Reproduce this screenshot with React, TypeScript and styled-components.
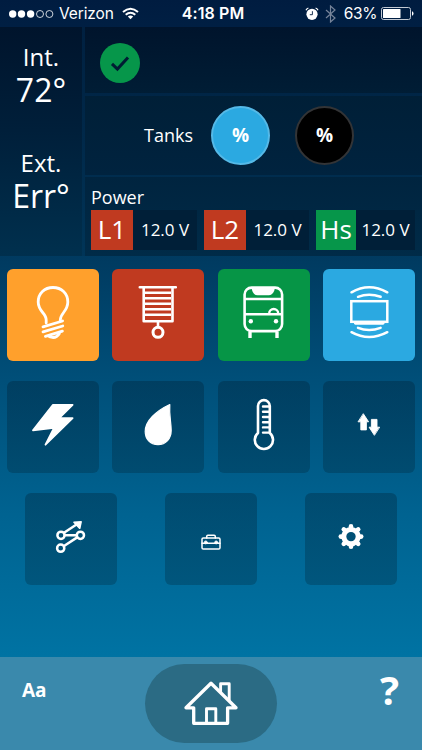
import React from 'react';
import styled, { createGlobalStyle } from 'styled-components';

const GlobalStyle = createGlobalStyle`
  * { box-sizing: border-box; }
  body { margin: 0; background: #003b60; }
`;

const Screen = styled.div`
  width: 422px;
  height: 750px;
  display: flex;
  flex-direction: column;
  overflow: hidden;
  color: #fff;
  font-family: 'Open Sans', sans-serif;
  background: linear-gradient(#001c40 0, #002b50 130px, #003b61 262px, #004f79 380px, #006391 515px, #0073a3 657px);
`;

const StatusBar = styled.header`
  height: 27px;
  display: grid;
  grid-template-columns: 1fr auto 1fr;
  align-items: center;
  padding: 0 8px 0 9px;
  font: 400 16px/27px Inter, sans-serif;
`;

const StatusGroup = styled.div<{ $end?: boolean }>`
  display: flex;
  align-items: center;
  justify-content: ${(p) => (p.$end ? 'flex-end' : 'flex-start')};
`;

const Carrier = styled.span`
  margin: 0 8px 0 5px;
  font-size: 15.5px;
  letter-spacing: -0.1px;
`;

const Clock = styled.span`
  padding-left: 3px;
  font-size: 16px;
  font-weight: 600;
  letter-spacing: 0.1px;
`;

const Charge = styled.span`
  margin: 0 4px 0 8px;
  font-size: 15.5px;
  letter-spacing: -0.4px;
`;

const Dashboard = styled.section`
  height: 229px;
  display: grid;
  grid-template-columns: 82px 1fr;
  column-gap: 3px;
  background: linear-gradient(#002040, #00294a 50%, #003558);
`;

const Climate = styled.div`
  display: flex;
  flex-direction: column;
  gap: 40px;
  padding-top: 13px;
  text-align: center;
  background: linear-gradient(#00142c, #001f3a 45%, #00304e);
`;

const Reading = styled.div`
  height: 66px;
`;

const ReadingLabel = styled.div`
  font-size: 24px;
  line-height: 33px;
`;

const ReadingValue = styled.div`
  font-size: 32px;
  line-height: 33px;
`;

const Panels = styled.div`
  display: grid;
  grid-template-rows: 66px 79px 79px;
  row-gap: 2.5px;
`;

const StatusPanel = styled.div`
  display: flex;
  align-items: center;
  padding: 5px 0 0 15px;
  background: linear-gradient(#00142c, #001d35);
`;

const TanksPanel = styled.div`
  display: flex;
  align-items: center;
  padding-left: 59px;
  font-size: 18px;
  background: linear-gradient(#001f37, #00233f);
`;

const TankLabel = styled.span`
  width: 49px;
`;

const TankGauge = styled.div<{ $fill: string; $ring: string; $gap: number }>`
  width: 59px;
  height: 59px;
  margin-left: ${(p) => p.$gap}px;
  border-radius: 50%;
  border: 2.5px solid ${(p) => p.$ring};
  background: ${(p) => p.$fill};
  display: flex;
  align-items: center;
  justify-content: center;
  font-size: 19px;
  font-weight: 700;
`;

const PowerPanel = styled.div`
  padding: 7px 7px 0 6px;
  background: linear-gradient(#00243f, #002b48);
`;

const PowerTitle = styled.div`
  font-size: 18px;
  line-height: 26px;
`;

const Meters = styled.div`
  display: flex;
  justify-content: space-between;
`;

const Meter = styled.div`
  height: 40px;
  display: flex;
  background: #001f38;
`;

const MeterName = styled.div<{ $color: string; $width: number }>`
  width: ${(p) => p.$width}px;
  background: ${(p) => p.$color};
  font-size: 26px;
  line-height: 39px;
  text-align: center;
`;

const MeterValue = styled.div<{ $width: number }>`
  width: ${(p) => p.$width}px;
  font-size: 17px;
  line-height: 40px;
  text-align: center;
  white-space: nowrap;
`;

const Controls = styled.main`
  height: 401px;
  padding: 13px 7px 0;
  display: flex;
  flex-direction: column;
  gap: 20px;
`;

const TileRow = styled.div<{ $inset?: number }>`
  display: flex;
  justify-content: space-between;
  padding: 0 ${(p) => p.$inset ?? 0}px;
`;

const Tile = styled.button<{ $color?: string }>`
  width: 92px;
  height: 92px;
  padding: 0;
  border: 0;
  border-radius: 6px;
  color: #fff;
  background: ${(p) => p.$color ?? 'linear-gradient(rgba(0, 20, 35, 0.28), rgba(0, 24, 38, 0.25))'};
  svg { display: block; }
`;

const Footer = styled.footer`
  height: 93px;
  display: grid;
  grid-template-columns: 1fr 132px 1fr;
  background: #3a89ac;
`;

const FooterText = styled.div<{ $help?: boolean }>`
  font-weight: 700;
  font-size: ${(p) => (p.$help ? 40 : 19)}px;
  line-height: 66px;
  text-align: ${(p) => (p.$help ? 'right' : 'left')};
  padding: ${(p) => (p.$help ? '0 23px 0 0' : '0 0 0 22px')};
`;

const HomeButton = styled.button`
  width: 132px;
  height: 79px;
  margin-top: 7px;
  padding: 0;
  border: 0;
  border-radius: 40px;
  background: #2b6b84;
  color: #fff;
  svg { display: block; }
`;

const Icon = ({ children, width = 2.6 }: { children: React.ReactNode; width?: number }) => (
  <svg width="92" height="92" viewBox="0 0 92 92" fill="none" stroke="currentColor" strokeWidth={width} strokeLinecap="round" strokeLinejoin="round">
    {children}
  </svg>
);

const Bulb = () => (
  <Icon width={2.8}>
    <path d="M39.2 54V51C39.2 44 31.2 42.5 31.2 33C31.2 24.5 37.5 18.5 46 18.5S60.8 24.5 60.8 33C60.8 42.5 53.3 44 53.3 51V52" />
    <path d="M36 57.8L55.6 52M36 62.8L55.8 57M38.4 67.4L55.4 62.2M42.4 67.8Q49 70.2 52.4 64.5" />
  </Icon>
);

const Blinds = () => (
  <Icon width={2.6}>
    <path d="M27.8 18.2H63.8M31.7 19V52.2H60.5V19M46 53V58" />
    <path d="M33 23.7H59M33 29.2H59M33 34.8H59M33 40.3H59M33 45.8H59" strokeLinecap="butt" />
    <circle cx="46" cy="63.3" r="5" strokeWidth="3" />
  </Icon>
);

const Bus = () => (
  <Icon>
    <rect x="26.6" y="18.6" width="37.5" height="43.5" rx="7" />
    <path d="M27 30H64M27 45.2H64" strokeLinecap="butt" />
    <path d="M51.2 44.5A4.5 4.5 0 0 1 60.2 44.5" strokeWidth="2.4" />
    <path d="M33.5 19H57Q55.5 26.3 51 26.3H39.5Q35 26.3 33.5 19Z" fill="currentColor" stroke="none" />
    <path d="M32 63V69M59 63V69" strokeWidth="3.4" strokeLinecap="butt" />
    <circle cx="32.8" cy="52.3" r="2.2" fill="currentColor" stroke="none" />
    <circle cx="58" cy="52.3" r="2.2" fill="currentColor" stroke="none" />
  </Icon>
);

const Awning = () => (
  <Icon width={2.5}>
    <rect x="28.3" y="32.2" width="36" height="20.6" strokeLinejoin="miter" />
    <path d="M32.4 54.3H60" strokeWidth="2.8" />
    <path d="M28.5 23.3Q46 13.2 64.3 23.3M35 27.8Q46 23.6 57.6 27.8M35 58.8Q46 63.2 57.6 58.8M28.5 63.2Q46 73 64.3 63.2" />
  </Icon>
);

const Bolt = () => (
  <Icon width={1.8}>
    <path d="M46 23.8H65.6L52.2 37.2H65.6L38.5 63.7L47 46.9L26 49.3Z" fill="currentColor" />
  </Icon>
);

const Drop = () => (
  <Icon width={1.2}>
    <path d="M57.8 23.5C57 35 59.2 41 59.2 49.5C59.2 57.5 54 63.6 46 63.6S33.2 58 33.2 50.5C33.2 40 44 30 57.8 23.5Z" fill="currentColor" />
  </Icon>
);

const Thermometer = () => (
  <Icon width={2.6}>
    <path d="M40 51.9V25A5.8 5.8 0 0 1 51.8 25V51.9A9.1 9.1 0 1 1 40 51.9Z" />
    <path d="M45 25.5H51M45 30.7H51M45 36H51M45 41.2H51M45 46.4H51M45 51.6H51" strokeWidth="2.4" />
  </Icon>
);

const Transfer = () => (
  <Icon width={0.9}>
    <path d="M40.5 33L45.6 40.8H43.4V48.9H37.8V40.8H35.4Z" fill="currentColor" />
    <path d="M51.2 54L46.1 46.2H48.4V38.4H54V46.2H56.3Z" fill="currentColor" />
  </Icon>
);

const Route = () => (
  <Icon width={2.5}>
    <circle cx="36" cy="42.3" r="3.6" />
    <circle cx="55.4" cy="42.3" r="3.6" />
    <circle cx="35.7" cy="55.2" r="3.6" />
    <path d="M39.8 42.3H51.6M39 39.8L51.5 31.5M39 53L52.2 44.4" />
    <path d="M48.9 29.2L56.2 28.8L54.8 35.4Z" fill="currentColor" strokeWidth="1.4" />
  </Icon>
);

const Toolbox = () => (
  <Icon width={1.5}>
    <rect x="37" y="44.9" width="18" height="11.2" rx="1.3" />
    <path d="M41.7 45V43.5Q41.7 42.3 42.9 42.3H49.1Q50.3 42.3 50.3 43.5V45M37 50.2H39.5M42 50.2H50M52.5 50.2H55" />
    <circle cx="40.8" cy="49.4" r="1.5" fill="currentColor" strokeWidth="0.8" />
    <circle cx="51.2" cy="49.4" r="1.5" fill="currentColor" strokeWidth="0.8" />
  </Icon>
);

const Gear = () => (
  <Icon width={5}>
    <circle cx="46" cy="43.6" r="7.2" />
    {[0, 45, 90, 135, 180, 225, 270, 315].map((angle) => (
      <path key={angle} d="M46 34.6V33.4" strokeWidth="4.6" transform={`rotate(${angle} 46 43.6)`} />
    ))}
  </Icon>
);

const House = () => (
  <svg width="132" height="79" viewBox="0 0 132 79" fill="none" stroke="currentColor" strokeWidth="3.3" strokeLinejoin="round" strokeLinecap="round">
    <path d="M66 19.2L41 43.8H48.7V59.3H82.6V43.8H91L66 19.2Z" />
    <path d="M75.6 28V19.8H84.2V36.5M61.5 59V44.7H70.8V59" strokeWidth="2.9" />
  </svg>
);

const SignalIcon = () => (
  <svg width="45" height="10" viewBox="0 0 45 10" fill="#fff">
    <circle cx="3.7" cy="5" r="3.7" />
    <circle cx="12.5" cy="5" r="3.7" />
    <circle cx="21.6" cy="5" r="3.7" />
    <g fill="none" stroke="#fff" strokeWidth="0.8">
      <circle cx="31" cy="5" r="3.5" />
      <circle cx="40.4" cy="5" r="3.5" />
    </g>
  </svg>
);

const WifiIcon = () => (
  <svg width="17" height="13" viewBox="0 0 17 13" fill="none" stroke="#fff" strokeWidth="2">
    <path d="M1 5Q8.5 -1.6 16 5M3.7 7.8Q8.5 3.7 13.3 7.8" />
    <path d="M5.8 9.6Q8.5 7.4 11.2 9.6L8.5 12.3Z" fill="#fff" stroke="none" />
  </svg>
);

const AlarmIcon = () => (
  <svg width="14" height="14" viewBox="0 0 14 14" fill="#fff">
    <circle cx="7" cy="7.3" r="5.6" />
    <path d="M1 3.3Q1.6 1.5 3.4 1M13 3.3Q12.4 1.5 10.6 1" fill="none" stroke="#fff" strokeWidth="1.2" />
    <path d="M7.4 4.2V7.7H4.8" fill="none" stroke="#001c3f" strokeWidth="0.9" />
  </svg>
);

const BluetoothIcon = () => (
  <svg width="11" height="18" viewBox="0 0 11 18" fill="none" stroke="#76849a" strokeWidth="1.2">
    <path d="M1 5L10 13L5.5 17V1L10 5L1 13" />
  </svg>
);

const StatusIcons = styled.div`
  display: flex;
  align-items: center;
  gap: 6px;
`;

const BatteryIcon = () => (
  <svg width="33" height="13" viewBox="0 0 33 13">
    <rect x="0.5" y="0.5" width="29" height="12" rx="2" fill="none" stroke="#c3cad4" />
    <rect x="2" y="2" width="17.5" height="9" rx="0.6" fill="#fff" />
    <path d="M31 4.3Q32.5 4.6 32.5 6.5T31 8.7Z" fill="#fff" />
  </svg>
);

const CheckBadge = () => (
  <svg width="40" height="40" viewBox="0 0 40 40">
    <circle cx="20" cy="20" r="20" fill="#06964a" />
    <path d="M12 20.8L17.4 26L28 14.4" fill="none" stroke="#001c33" strokeWidth="3" />
  </svg>
);

const meters = [
  { name: 'L1', color: '#c03a20', nameWidth: 42, valueWidth: 64 },
  { name: 'L2', color: '#c03a20', nameWidth: 42, valueWidth: 63 },
  { name: 'Hs', color: '#06964a', nameWidth: 40, valueWidth: 59 },
];

export default function App() {
  return (
    <Screen>
      <GlobalStyle />
      <StatusBar>
        <StatusGroup>
          <SignalIcon />
          <Carrier>Verizon</Carrier>
          <WifiIcon />
        </StatusGroup>
        <Clock>4:18 PM</Clock>
        <StatusGroup $end>
          <StatusIcons>
            <AlarmIcon />
            <BluetoothIcon />
          </StatusIcons>
          <Charge>63%</Charge>
          <BatteryIcon />
        </StatusGroup>
      </StatusBar>
      <Dashboard>
        <Climate>
          <Reading>
            <ReadingLabel>Int.</ReadingLabel>
            <ReadingValue>72°</ReadingValue>
          </Reading>
          <Reading>
            <ReadingLabel>Ext.</ReadingLabel>
            <ReadingValue>Err°</ReadingValue>
          </Reading>
        </Climate>
        <Panels>
          <StatusPanel><CheckBadge /></StatusPanel>
          <TanksPanel>
            <TankLabel>Tanks</TankLabel>
            <TankGauge $fill="#2ba9e1" $ring="#55b9e7" $gap={18}>%</TankGauge>
            <TankGauge $fill="#000" $ring="#333436" $gap={25}>%</TankGauge>
          </TanksPanel>
          <PowerPanel>
            <PowerTitle>Power</PowerTitle>
            <Meters>
              {meters.map((m) => (
                <Meter key={m.name}>
                  <MeterName $color={m.color} $width={m.nameWidth}>{m.name}</MeterName>
                  <MeterValue $width={m.valueWidth}>12.0 V</MeterValue>
                </Meter>
              ))}
            </Meters>
          </PowerPanel>
        </Panels>
      </Dashboard>
      <Controls>
        <TileRow>
          <Tile $color="#ffa02c" aria-label="Lights"><Bulb /></Tile>
          <Tile $color="#c03a20" aria-label="Shades"><Blinds /></Tile>
          <Tile $color="#069546" aria-label="Vehicle"><Bus /></Tile>
          <Tile $color="#2ba9e1" aria-label="Awning"><Awning /></Tile>
        </TileRow>
        <TileRow>
          <Tile aria-label="Energy"><Bolt /></Tile>
          <Tile aria-label="Water"><Drop /></Tile>
          <Tile aria-label="Temperature"><Thermometer /></Tile>
          <Tile aria-label="Transfer"><Transfer /></Tile>
        </TileRow>
        <TileRow $inset={18}>
          <Tile aria-label="Route"><Route /></Tile>
          <Tile aria-label="Tools"><Toolbox /></Tile>
          <Tile aria-label="Settings"><Gear /></Tile>
        </TileRow>
      </Controls>
      <Footer>
        <FooterText>Aa</FooterText>
        <HomeButton aria-label="Home"><House /></HomeButton>
        <FooterText $help>?</FooterText>
      </Footer>
    </Screen>
  );
}
